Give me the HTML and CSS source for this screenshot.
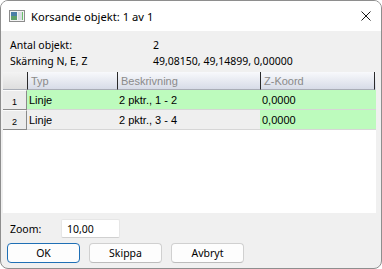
FILE: index.html
```html
<!DOCTYPE html>
<html lang="sv">
<head>
  <meta charset="utf-8">
  <title>Korsande objekt</title>
  <link rel="stylesheet" href="styles.css">
</head>
<body>

  <div class="window">
    <!-- title bar -->
    <div class="titlebar">
      <svg class="app-icon" width="16" height="12" viewBox="0 0 16 12">
        <rect x="0.5" y="0.5" width="15" height="11" fill="#f4f4f4" stroke="#8c8c8c"/>
        <rect x="2" y="2" width="6" height="8" fill="#4b7fa6"/>
        <rect x="2" y="6" width="6" height="4" fill="#5fa06a"/>
        <rect x="9" y="2" width="5" height="8" fill="#d9dde2"/>
        <rect x="13" y="2" width="1" height="8" fill="#6bbf6b"/>
      </svg>
      <span class="title">Korsande objekt: 1 av 1</span>
      <svg class="close" width="10" height="10" viewBox="0 0 10 10">
        <path d="M0.5 0.5 L9.5 9.5 M9.5 0.5 L0.5 9.5" stroke="#1a1a1a" stroke-width="1"/>
      </svg>
    </div>

    <div class="content">
      <div class="info">
        <div class="info-row"><span class="info-label">Antal objekt:</span><span>2</span></div>
        <div class="info-row"><span class="info-label">Skärning N, E, Z</span><span>49,08150, 49,14899, 0,00000</span></div>
      </div>

      <!-- result grid -->
      <div class="grid">
        <div class="row head">
          <div class="cell corner"></div>
          <div class="cell">Typ</div>
          <div class="cell">Beskrivning</div>
          <div class="cell last">Z-Koord</div>
        </div>
        <div class="row hit">
          <div class="cell rowhead">1</div>
          <div class="cell">Linje</div>
          <div class="cell">2 pktr., 1 - 2</div>
          <div class="cell green">0,0000</div>
        </div>
        <div class="row">
          <div class="cell rowhead">2</div>
          <div class="cell">Linje</div>
          <div class="cell">2 pktr., 3 - 4</div>
          <div class="cell green">0,0000</div>
        </div>
      </div>

      <div class="zoom-row">
        <label for="zoom">Zoom:</label>
        <input type="text" id="zoom" value="10,00">
      </div>

      <div class="buttons">
        <button class="default">OK</button>
        <button>Skippa</button>
        <button>Avbryt</button>
      </div>
    </div>
  </div>

</body>
</html>
```

FILE: styles.css
```css
* {
  box-sizing: border-box;
}

body {
  margin: 0;
  background: #ffffff;
  font-family: 'Noto Sans', sans-serif;
  font-size: 10.5px;
  color: #000;
}

.window {
  width: 382px;
  height: 269px;
  border: 1px solid #8e8e8e;
  border-radius: 8px;
  overflow: hidden;
  background: #f0f0f0;
  display: flex;
  flex-direction: column;
}

.titlebar {
  height: 30px;
  background: #ffffff;
  display: flex;
  align-items: center;
  padding-left: 8px;
  flex-shrink: 0;
}

.title {
  margin-left: 6px;
  font-size: 11.2px;
  color: #000;
}

.close {
  margin-left: auto;
  margin-right: 10px;
}

.content {
  flex: 1;
  display: flex;
  flex-direction: column;
  padding: 6px 0 0 9px;
}

.info-row {
  display: flex;
  height: 16px;
  align-items: center;
}

.info-label {
  width: 143px;
}

/* grid */
.grid {
  margin-top: 3px;
  margin-left: -7px;
  width: 373px;
  height: 141px;
  background: #ffffff;
  font-family: 'Liberation Sans', sans-serif;
  font-size: 11px;
}

.row {
  display: grid;
  grid-template-columns: 24px 90px 143px 116px;
  height: 20px;
  background: #efefef;
}

.row .cell {
  display: flex;
  align-items: center;
  padding-left: 2px;
  border-bottom: 1px solid #d6d6d6;
  white-space: nowrap;
}

.row.hit {
  background: #bdfbbd;
}

.cell.green {
  background: #bdfbbd;
}

.row.head {
  height: 18px;
  background: linear-gradient(#f8f9fc, #d5dae6);
  color: #8a8a8a;
}

.row.head .cell {
  border-left: 1px solid #2a2a2a;
  border-bottom: 1px solid #a9adb6;
  padding-left: 3px;
}

.row.head .cell.corner {
  border-left: none;
  background: linear-gradient(#f3f3f3, #dedede);
}

.row.head .cell.last {
  border-right: 1px solid #2a2a2a;
  margin-right: 1px;
}

.cell.rowhead {
  background: #ececec;
  border-top: 1px solid #fbfbfb;
  border-right: 1px solid #8a8a8a;
  border-bottom: 1px solid #8a8a8a;
  justify-content: center;
  padding-left: 0;
  padding-top: 3px;
  font-size: 9px;
}

/* zoom field */
.zoom-row {
  display: flex;
  align-items: center;
  margin-top: 6px;
  height: 19px;
}

.zoom-row label {
  width: 51px;
}

.zoom-row input {
  width: 59px;
  height: 19px;
  border: 1px solid #e6e6e6;
  border-bottom-color: #d0d0d0;
  border-radius: 2px;
  background: #fff;
  font-family: 'Noto Sans', sans-serif;
  font-size: 10.5px;
  padding: 0 0 0 5px;
  outline: none;
}

.buttons {
  display: flex;
  gap: 9px;
  margin-top: 5px;
  margin-left: -3px;
}

button {
  width: 73px;
  height: 20px;
  background: #fdfdfd;
  border: 1px solid #d0d0d0;
  border-bottom-color: #bcbcbc;
  border-radius: 4px;
  font-family: 'Noto Sans', sans-serif;
  font-size: 10.5px;
  padding: 0;
  color: #000;
}

button.default {
  border: 1px solid #1f6fb5;
}
```
